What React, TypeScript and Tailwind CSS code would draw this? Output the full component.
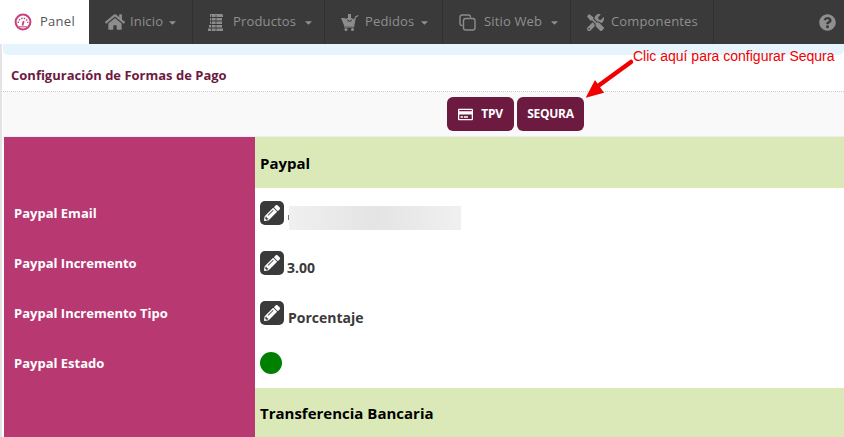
import { ReactNode } from "react";
import { FaHome, FaPencilAlt, FaQuestionCircle, FaRegCreditCard, FaTools, FaCaretDown } from "react-icons/fa";

const font = "font-['Open_Sans','Noto_Sans',sans-serif]";

function GaugeIcon() {
  return (
    <svg width="18" height="18" viewBox="0 0 18 18" fill="none" stroke="#c9407f">
      <circle cx="9" cy="9" r="7.4" strokeWidth="2" />
      <path d="M4.200 10a4.800 4.800 0 0 1 9.600 0" strokeWidth="1.4" strokeDasharray="1.500 1.200" />
      <path d="M8.500 12.500l1.200-4.500" strokeWidth="1.800" />
      <path d="M5 13.800h8" strokeWidth="1" />
    </svg>
  );
}

function StackIcon() {
  return (
    <svg width="18" height="19" viewBox="0 0 18 19" fill="#8c8c8c">
      <path d="M3 1h12l1 1v2H3z" />
      <path d="M3 5h12v2.500H3zM3 8.500h12V11H3zM2 12h13v2.500H2zM1 15.500h15V18H1z" />
      <path d="M4.500 2v16M9 2v16" stroke="#3a3a3a" strokeWidth="0.7" />
    </svg>
  );
}

function CartIcon() {
  return (
    <svg width="19" height="19" viewBox="0 0 19 19" fill="#8c8c8c">
      <path d="M1 5h3.500l1.500 1h1.500v2.500h4V6H14l1-1-1.500 8.500H4.500z" />
      <path d="M8 1h3v4h2l-3.500 3L6 5h2z" />
      <path d="M15 3.500l3-1.500.5 1-2.600 1.500-1.900 10H4v-1h9.100z" />
      <circle cx="6" cy="16.500" r="1.500" />
      <circle cx="12.500" cy="16.500" r="1.500" />
    </svg>
  );
}

function CopyIcon() {
  return (
    <svg width="17" height="17" viewBox="0 0 17 17" fill="none" stroke="#8c8c8c" strokeWidth="1.400">
      <path d="M3.500 11.500H3a2 2 0 0 1-2-2V3a2 2 0 0 1 2-2h6.500a2 2 0 0 1 2 2v.500" />
      <rect x="4.500" y="4.500" width="11.500" height="11.500" rx="2.200" />
    </svg>
  );
}

function NavItem({ icon, label, caret, width, inset, gap }: { icon: ReactNode; label: string; caret?: boolean; width: string; inset: string; gap: string }) {
  return (
    <div className={`flex h-full items-center border-r border-[#303030] ${width} ${inset} ${gap}`}>
      <span className="flex items-center text-[#8c8c8c]">{icon}</span>
      <span className="text-[13px] tracking-[0.15px] text-[#8f8f8f]">{label}</span>
      {caret && <FaCaretDown className="-ml-px text-[#8f8f8f]" size={11} />}
    </div>
  );
}

function Section({ title, last }: { title: string; last?: boolean }) {
  return (
    <div className={`flex items-center bg-[#dbe9b9] pt-[2px] pl-[5px] text-[15px] font-bold text-black ${last ? "h-[49px]" : "h-[51px]"}`}>
      {title}
    </div>
  );
}

function EditButton() {
  return (
    <span className="flex h-6 w-6 shrink-0 items-center justify-center rounded-[5px] bg-[#3a3a3a] text-white">
      <FaPencilAlt size={16} />
    </span>
  );
}

function Field({ children }: { children: ReactNode }) {
  return <div className="flex h-[50px] items-center pl-[5px]">{children}</div>;
}

function Label({ text }: { text: string }) {
  return (
    <div className="flex h-[50px] items-center pt-[2px] pl-[10px] text-[13px] font-bold text-white">{text}</div>
  );
}

export default function App() {
  return (
    <div className={`relative h-[437px] w-[844px] overflow-hidden bg-white ${font}`}>
      {/* Top nav */}
      <div className="flex h-11 items-center bg-[#3a3a3a]">
        <div className="flex h-full w-[89px] items-center justify-center gap-[8px] bg-white">
          <GaugeIcon />
          <span className="text-[13px] tracking-[0.3px] text-[#555]">Panel</span>
        </div>
        <NavItem width="w-[104px]" inset="pl-4" gap="gap-[5px]" icon={<FaHome size={20} />} label="Inicio" caret />
        <NavItem width="w-[132px]" inset="pl-[14px]" gap="gap-[8px]" icon={<StackIcon />} label="Productos" caret />
        <NavItem width="w-[118px]" inset="pl-[15px]" gap="gap-[6px]" icon={<CartIcon />} label="Pedidos" caret />
        <NavItem width="w-[128px]" inset="pl-4" gap="gap-[8px]" icon={<CopyIcon />} label="Sitio Web" caret />
        <NavItem width="w-[143px]" inset="pl-4" gap="gap-[7px]" icon={<FaTools size={17} />} label="Componentes" />
        <div className="ml-auto pr-[8px] text-[#8f8f8f]">
          <FaQuestionCircle size={17} />
        </div>
      </div>

      {/* Page body */}
      <div className="border-l-[2px] border-[#e4e4e4] pl-[1px]">
        <div className="h-[11px] rounded-b-[5px] bg-[#e6f5fd]" />
        <div className="flex h-[37px] items-center border-b border-dotted border-[#c8c8c8] pt-[5px] pl-[8px] text-[13px] font-bold text-[#6d1a41]">
          Configuración de Formas de Pago
        </div>
        <div className="flex h-[45px] items-start gap-[3px] border-b border-[#eeeeee] bg-[#f9f9f9] pt-[5px] pl-[444px]">
          <button className="flex h-[34px] w-[67px] items-center justify-center gap-[8px] rounded-[6px] bg-[#6d1a41] text-[12px] font-bold tracking-[-0.3px] text-white">
            <FaRegCreditCard size={15} />
            TPV
          </button>
          <button className="flex h-[34px] w-[67px] items-center justify-center rounded-[6px] bg-[#6d1a41] text-[12px] font-bold tracking-[-0.3px] text-white">
            SEQURA
          </button>
        </div>

        {/* Settings table */}
        <div className="ml-[1px] flex">
          <div className="w-[251px] bg-[#b83872] pt-[51px] pb-[50px]">
            <Label text="Paypal Email" />
            <Label text="Paypal Incremento" />
            <Label text="Paypal Incremento Tipo" />
            <Label text="Paypal Estado" />
          </div>
          <div className="flex-1">
            <Section title="Paypal" />
            <Field>
              <EditButton />
              <span className="mt-[9px] ml-[4px] h-[5px] w-px bg-[#777]" />
              <span className="mt-[9px] h-6 w-[172px] bg-gradient-to-r from-[#f0f0f0] via-[#e4e4e4] to-[#f0f0f0] blur-[0.5px]" />
            </Field>
            <Field>
              <EditButton />
              <span className="mt-[9px] ml-[3px] text-[14px] font-bold text-[#3a3a3a]">3.00</span>
            </Field>
            <Field>
              <EditButton />
              <span className="mt-[9px] ml-[4px] text-[14px] font-bold text-[#3a3a3a]">Porcentaje</span>
            </Field>
            <Field>
              <span className="h-[22px] w-[22px] rounded-full bg-[#008000]" />
            </Field>
            <Section title="Transferencia Bancaria" last />
          </div>
        </div>
      </div>

      {/* Annotation */}
      <span className="absolute top-[48px] left-[633px] font-['Liberation_Sans',sans-serif] text-[14px] leading-[16px] text-[#f00000]">
        Clic aquí para configurar Sequra
      </span>
      <svg className="absolute top-[56px] left-[580px]" width="60" height="46" viewBox="0 0 60 46">
        <path d="M51 6L18 30" stroke="#f00000" strokeWidth="4.500" strokeLinecap="round" />
        <path d="M5.700 41.700L15 24L24 36.700z" fill="#f00000" />
      </svg>
    </div>
  );
}
